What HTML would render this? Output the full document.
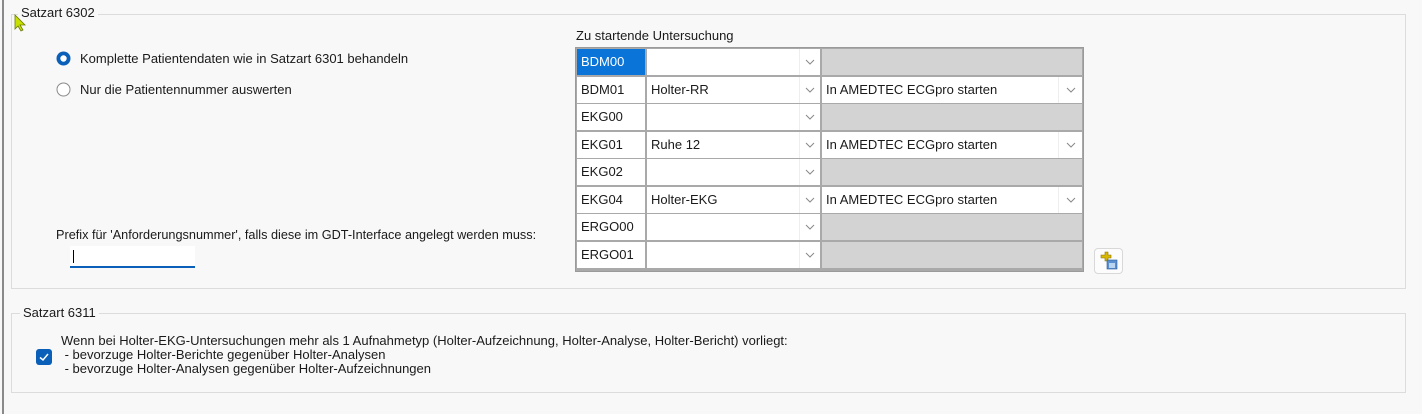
<!DOCTYPE html>
<html><head><meta charset="utf-8"><style>
body{margin:0;width:1422px;height:414px;background:#f8f8f8;font-family:"Liberation Sans",sans-serif;font-size:13px;color:#1a1a1a;position:relative;overflow:hidden}
.a{position:absolute;white-space:nowrap}
.gb{position:absolute;border:1px solid #dcdcdc}
.lg{position:absolute;background:#f8f8f8;padding:0 3px;font-size:13px}
.c{position:absolute;background:#fff;height:26px;line-height:26px;padding-left:4px;box-sizing:border-box;white-space:nowrap}
.g{background:#d3d3d3}
.chev{position:absolute;top:9px;width:10px;height:8px}
</style></head><body>
<div class="a" style="left:2px;top:0;width:2px;height:414px;background:#8a8a8a"></div>
<div class="gb" style="left:11px;top:14px;width:1393px;height:273px"></div>
<div class="lg" style="left:18px;top:5px">Satzart 6302</div>
<svg class="a" style="left:14px;top:14px" width="12" height="18"><path d="M1 1 L1 15 L4 12 L7 17 L9 16 L6 11 L11 11 Z" fill="#c8e000" stroke="#6a7a00" stroke-width="0.8"/></svg>

<svg class="a" style="left:56px;top:51px" width="15" height="15"><circle cx="7.5" cy="7.5" r="7" fill="#0a5fb8"/><circle cx="7.5" cy="7.5" r="3.2" fill="#fff"/></svg>
<div class="a" style="left:80px;top:51px">Komplette Patientendaten wie in Satzart 6301 behandeln</div>
<svg class="a" style="left:56px;top:82px" width="15" height="15"><circle cx="7.5" cy="7.5" r="6.5" fill="#fff" stroke="#8a8a8a"/></svg>
<div class="a" style="left:80px;top:82px">Nur die Patientennummer auswerten</div>

<div class="a" style="left:56px;top:228px;font-size:12.7px">Prefix für 'Anforderungsnummer', falls diese im GDT-Interface angelegt werden muss:</div>
<div class="a" style="left:70px;top:246px;width:125px;height:22px;background:#fff;border-bottom:2px solid #0a5fb8;box-sizing:border-box"></div>
<div class="a" style="left:73px;top:250px;width:1px;height:13px;background:#000"></div>

<div class="a" style="left:576px;top:28px">Zu startende Untersuchung</div>
<div class="a" style="left:575px;top:47px;width:509px;height:225px;background:#a9a9a9;border:1px solid #9a9a9a;box-sizing:border-box"></div>

<div id="g"></div>
<script>
var rows=[["BDM00","",""],["BDM01","Holter-RR","In AMEDTEC ECGpro starten"],["EKG00","",""],["EKG01","Ruhe 12","In AMEDTEC ECGpro starten"],["EKG02","",""],["EKG04","Holter-EKG","In AMEDTEC ECGpro starten"],["ERGO00","",""],["ERGO01","",""]];
var h="";var chev='<svg class="chev" style="left:0" viewBox="0 0 10 8"><path d="M1 2 L5 6 L9 2" fill="none" stroke="#888" stroke-width="1"/></svg>';
rows.forEach(function(r,i){var t=Math.round(49+i*27.5);
var sel=i==0;
h+='<div class="c" style="left:577px;top:'+t+'px;width:68px;'+(sel?'background:#0a74d8;color:#fff':'')+'">'+r[0]+'</div>';
h+='<div class="c" style="left:647px;top:'+t+'px;width:173px">'+r[1]+'<span style="position:absolute;left:152px;top:0;width:1px;height:26px;background:#eee"></span><span style="position:absolute;left:158px;top:0">'+chev+'</span></div>';
if(r[2])h+='<div class="c" style="left:822px;top:'+t+'px;width:260px">'+r[2]+'<span style="position:absolute;left:236px;top:0;width:1px;height:26px;background:#eee"></span><span style="position:absolute;left:244px;top:0">'+chev+'</span></div>';
else h+='<div class="c g" style="left:822px;top:'+t+'px;width:260px"></div>';
});
document.getElementById("g").innerHTML=h;
</script>

<div class="a" style="left:1094px;top:248px;width:29px;height:26px;background:#fcfcfc;border:1px solid #d8d8d8;border-radius:4px;box-sizing:border-box">
<svg width="27" height="24"><path d="M6 6h4v-3h3v3h3v3h-3v3h-3v-3h-4z" fill="#d8b800" stroke="#8a7000" stroke-width="0.6"/><rect x="12" y="11" width="10" height="9" fill="#5a8fd0" stroke="#2a5a9a" stroke-width="0.6"/><rect x="14" y="14" width="6" height="5" fill="#b8d4f0"/></svg></div>

<div class="gb" style="left:11px;top:313px;width:1393px;height:78px"></div>
<div class="lg" style="left:20px;top:305px">Satzart 6311</div>
<div class="a" style="left:36px;top:349px;width:16px;height:16px;background:#0a5fb8;border-radius:3px"><svg width="16" height="16"><path d="M4 8.5 L7 11 L12 5" fill="none" stroke="#fff" stroke-width="1.5"/></svg></div>
<div class="a" style="left:61px;top:334px;line-height:14px">Wenn bei Holter-EKG-Untersuchungen mehr als 1 Aufnahmetyp (Holter-Aufzeichnung, Holter-Analyse, Holter-Bericht) vorliegt:<br>&nbsp;- bevorzuge Holter-Berichte gegenüber Holter-Analysen<br>&nbsp;- bevorzuge Holter-Analysen gegenüber Holter-Aufzeichnungen</div>
</body></html>
